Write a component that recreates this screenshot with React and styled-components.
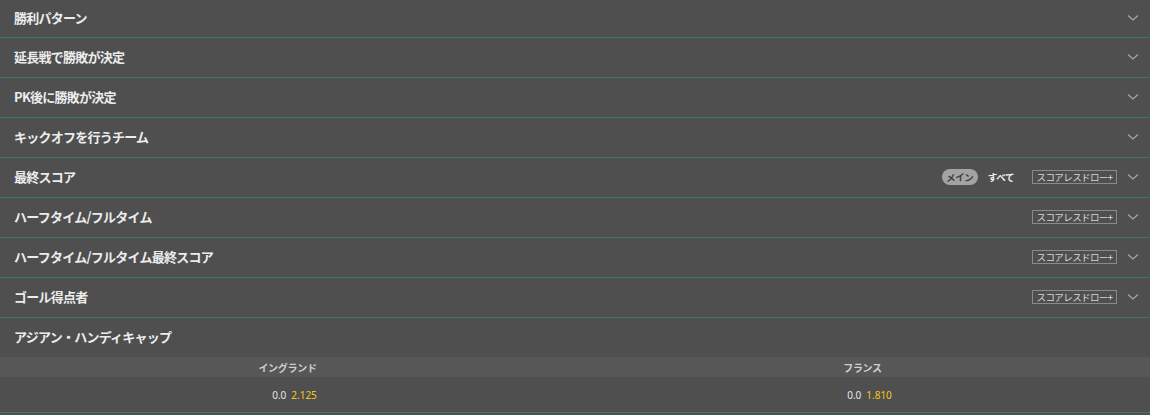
import React from "react";
import styled, { createGlobalStyle } from "styled-components";

const Global = createGlobalStyle`
  html, body { margin: 0; padding: 0; background: #4f4f4f; }
  body { font-family: "Noto Sans CJK JP", "Noto Sans", sans-serif; }
`;

const List = styled.div`
  width: 1150px;
  background: #4f4f4f;
`;

const Row = styled.div`
  display: flex;
  align-items: center;
  box-sizing: border-box;
  height: 40px;
  padding: 0 11px 2px 14px;
  border-bottom: 1px solid #357a62;
  &:first-child { height: 38px; }
`;

const Title = styled.div`
  flex: 1;
  color: #ececec;
  font-size: 13px;
  line-height: 16px;
  font-weight: 700;
  letter-spacing: -0.75px;
`;

const Tools = styled.div`
  display: flex;
  align-items: center;
`;

const Pill = styled.span`
  display: inline-flex;
  align-items: center;
  justify-content: center;
  box-sizing: border-box;
  height: 16px;
  width: 36px;
  border-radius: 8px;
  background: #a3a3a3;
  color: #3f3f3f;
  font-size: 9.5px;
  font-weight: 700;
  letter-spacing: -0.4px;
  margin-right: 10px;
`;

const Tab = styled.span`
  color: #f0f0f0;
  font-size: 9.5px;
  font-weight: 700;
  letter-spacing: -0.4px;
  margin-right: 18px;
`;

const Box = styled.span`
  display: inline-flex;
  align-items: center;
  justify-content: center;
  box-sizing: border-box;
  height: 14px;
  width: 85px;
  border: 1px solid #8a8a8a;
  color: #d8d8d8;
  font-size: 9.5px;
  line-height: 12px;
  letter-spacing: -0.6px;
  white-space: nowrap;
`;

const Chevron = styled.svg`
  margin-left: 10px;
  width: 12px;
  height: 8px;
  flex: none;
`;

const Section = styled.div`
  border-bottom: 1px solid #357a62;
`;

const SecHead = styled.div`
  display: flex;
  align-items: center;
  box-sizing: border-box;
  height: 39px;
  padding: 0 14px 2px;
  color: #ececec;
  font-size: 13px;
  line-height: 16px;
  font-weight: 700;
  letter-spacing: -0.75px;
`;

const Grid = styled.div`
  display: grid;
  grid-template-columns: 1fr 1fr;
  height: ${(p) => p.$h}px;
  background: ${(p) => p.$bg};
  align-items: center;
`;

const ColHead = styled.div`
  text-align: center;
  color: #cfcfcf;
  font-size: 10px;
  font-weight: 700;
  letter-spacing: -0.3px;
`;

const Cell = styled.div`
  display: flex;
  justify-content: center;
  gap: 5px;
  padding-left: 14px;
  font-size: 10px;
  font-family: "Noto Sans", sans-serif;
`;

const Line = styled.span`
  color: #e6e6e6;
`;

const Odds = styled.span`
  color: #fcc51f;
`;

const ChevronIcon = () => (
  <Chevron viewBox="0 0 12 8">
    <path d="M1 1.5 L6 6 L11 1.5" fill="none" stroke="#a6a6a6" strokeWidth="1.3" />
  </Chevron>
);

const rows = [
  { t: "勝利パターン" },
  { t: "延長戦で勝敗が決定" },
  { t: "PK後に勝敗が決定" },
  { t: "キックオフを行うチーム" },
  { t: "最終スコア", tabs: true, box: true },
  { t: "ハーフタイム/フルタイム", box: true },
  { t: "ハーフタイム/フルタイム最終スコア", box: true },
  { t: "ゴール得点者", box: true },
];

export default function App() {
  return (
    <>
      <Global />
      <List>
        {rows.map((r) => (
          <Row key={r.t}>
            <Title>{r.t}</Title>
            <Tools>
              {r.tabs && (
                <>
                  <Pill>メイン</Pill>
                  <Tab>すべて</Tab>
                </>
              )}
              {r.box && <Box>スコアレスドロー+</Box>}
              <ChevronIcon />
            </Tools>
          </Row>
        ))}
        <Section>
          <SecHead>アジアン・ハンディキャップ</SecHead>
          <Grid $h={20} $bg="#575757">
            <ColHead>イングランド</ColHead>
            <ColHead>フランス</ColHead>
          </Grid>
          <Grid $h={35} $bg="#4f4f4f">
            <Cell>
              <Line>0.0</Line>
              <Odds>2.125</Odds>
            </Cell>
            <Cell>
              <Line>0.0</Line>
              <Odds>1.810</Odds>
            </Cell>
          </Grid>
        </Section>
      </List>
    </>
  );
}
